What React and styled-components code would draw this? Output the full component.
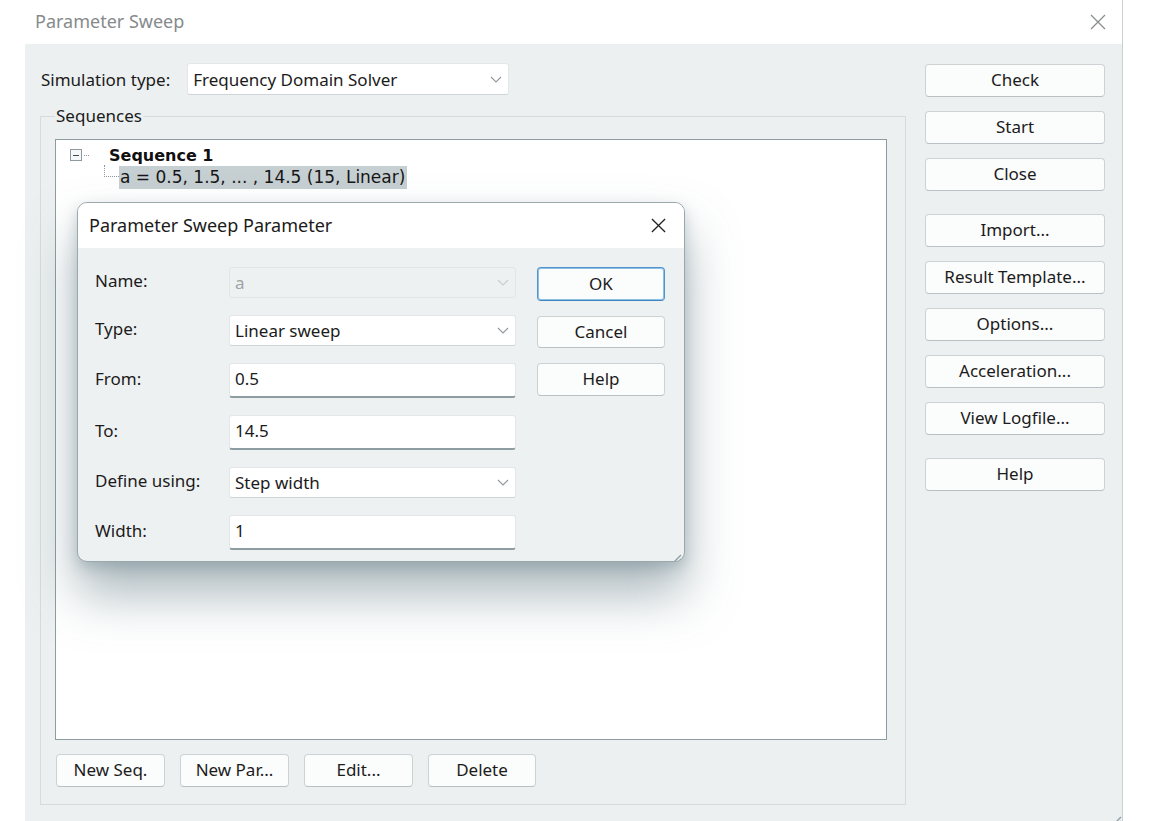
import React from 'react';
import styled, { createGlobalStyle } from 'styled-components';

const GlobalStyle = createGlobalStyle`
  html, body {
    margin: 0;
    padding: 0;
    background: #ffffff;
  }
  body {
    font-family: "Noto Sans", "Liberation Sans", sans-serif;
    color: #1b1b1b;
  }
  * { box-sizing: border-box; }
`;

const Page = styled.div`
  position: relative;
  width: 1149px;
  height: 821px;
  overflow: hidden;
`;

const Window = styled.div`
  margin-left: 25px;
  width: 1098px;
  height: 821px;
  display: flex;
  flex-direction: column;
  border-right: 1px solid #c9d1d3;
`;

const TitleBar = styled.div`
  height: 44px;
  flex: none;
  background: #ffffff;
  display: flex;
  align-items: center;
  justify-content: space-between;
  padding: 0 14px 0 10px;
`;

const Title = styled.div`
  font-size: 18px;
  color: ${p => (p.$muted ? '#868a8c' : '#1b1b1b')};
  padding-bottom: 2px;
`;

const CloseX = styled.button`
  border: 0;
  background: transparent;
  padding: 0;
  width: 20px;
  height: 20px;
  display: flex;
  align-items: center;
  justify-content: center;
  color: ${p => p.$color || '#8a8d8f'};
`;

const Body = styled.div`
  flex: 1;
  background: #ecf0f1;
  display: flex;
  padding: 19px 17px 16px 15px;
  gap: 19px;
  position: relative;
`;

const LeftColumn = styled.div`
  flex: 1;
  display: flex;
  flex-direction: column;
`;

const TypeRow = styled.div`
  display: flex;
  align-items: center;
  height: 32px;
  gap: 17px;
  padding-left: 1px;
`;

const Label = styled.span`
  font-size: 17px;
  color: #1b1b1b;
  white-space: nowrap;
`;

const Combo = styled.div`
  width: ${p => p.$width || '100%'};
  height: ${p => p.$height || '32px'};
  background: ${p => (p.$disabled ? '#eef1f2' : '#ffffff')};
  border: 1px solid ${p => (p.$disabled ? '#e1e5e6' : '#e3e7e8')};
  border-bottom-color: ${p => (p.$disabled ? '#e1e5e6' : '#cfd5d7')};
  border-radius: 3px;
  display: flex;
  align-items: center;
  justify-content: space-between;
  padding: 0 6px 0 5px;
  font-size: 17px;
  color: ${p => (p.$disabled ? '#9ea3a5' : '#1b1b1b')};
`;

const Chevron = ({ light }) => (
  <svg width="12" height="7" viewBox="0 0 12 7">
    <path d="M1 1 L6 6 L11 1" fill="none" stroke={light ? '#c8cdcf' : '#939a9d'} strokeWidth="1.1" />
  </svg>
);

const Group = styled.fieldset`
  flex: 1;
  margin: 11px 0 0 0;
  border: 1px solid #d6dcde;
  padding: 13px 18px 17px 14px;
  display: flex;
  flex-direction: column;
  min-width: 0;
`;

const Legend = styled.legend`
  font-size: 17px;
  padding: 0 1px;
  margin-left: 0;
  line-height: 20px;
`;

const TreeBox = styled.div`
  flex: 1;
  background: #ffffff;
  border: 1px solid #8c9ca1;
  padding: 5px 0 0 14px;
`;

const TreeRow = styled.div`
  display: flex;
  align-items: center;
  height: ${p => p.$h || '20px'};
`;

const Expander = styled.span`
  width: 12px;
  height: 12px;
  border: 1px solid #8f9aa0;
  display: flex;
  align-items: center;
  justify-content: center;
  background: #f4f6f7;
  flex: none;
`;

const ExpanderMinus = styled.span`
  width: 6px;
  height: 1px;
  background: #3d4a50;
`;

const Dots = styled.span`
  width: ${p => p.$w || '8px'};
  border-top: 1px dotted #8d989d;
  margin: ${p => p.$m || '0'};
  align-self: center;
`;

const NodeTitle = styled.span`
  font-family: "DejaVu Sans", "Noto Sans", sans-serif;
  font-weight: bold;
  font-size: 16px;
  margin-left: 20px;
  color: #101010;
`;

const Connector = styled.span`
  width: 15px;
  height: 12px;
  margin-left: 34px;
  border-left: 1px dotted #8d989d;
  border-bottom: 1px dotted #8d989d;
  align-self: flex-start;
  flex: none;
`;

const Selected = styled.span`
  background: #c6cfd2;
  font-family: "DejaVu Sans", "Noto Sans", sans-serif;
  font-size: 17px;
  padding: 0 2px 0 1px;
  line-height: 23px;
  color: #161616;
`;

const ButtonRow = styled.div`
  display: flex;
  gap: 15px;
  margin-top: 14px;
  padding-left: 1px;
`;

const Button = styled.button`
  width: ${p => p.$width || '180px'};
  height: ${p => p.$height || '33px'};
  margin-top: ${p => p.$gapTop || '0'};
  background: #fbfcfc;
  border: 1px solid ${p => (p.$primary ? '#4f95cc' : '#cdd3d5')};
  border-bottom-color: ${p => (p.$primary ? '#3f86c0' : '#b9c1c4')};
  box-shadow: ${p => (p.$primary ? 'inset 0 0 0 1px #8ec0e6' : 'none')};
  border-radius: 4px;
  font-family: inherit;
  font-size: 17px;
  color: #1b1b1b;
  padding: 0 0 2px 0;
  flex: none;
`;

const RightColumn = styled.div`
  width: 180px;
  display: flex;
  flex-direction: column;
  gap: 14px;
  padding-top: 1px;
`;

const Grip = styled.div`
  position: absolute;
  right: ${p => p.$r || '0'};
  bottom: ${p => p.$b || '0'};
  width: 12px;
  height: 12px;
`;

const GripLines = () => (
  <svg width="12" height="12" viewBox="0 0 12 12">
    <path d="M11 3 L3 11 M11 7 L7 11" stroke="#8c9ba0" strokeWidth="1.3" />
  </svg>
);

/* the modal child dialog */
const Dialog = styled.div`
  position: absolute;
  left: 77px;
  top: 202px;
  width: 608px;
  height: 360px;
  border: 1px solid #9aa8ad;
  border-radius: 10px;
  overflow: hidden;
  background: #eef1f2;
  box-shadow: 0 32px 50px rgba(90, 115, 125, 0.5), 0 6px 14px rgba(90, 115, 125, 0.3);
  display: flex;
  flex-direction: column;
`;

const DialogTitleBar = styled(TitleBar)`
  height: 45px;
  padding: 0 16px 0 11px;
`;

const DialogBody = styled.div`
  flex: 1;
  display: flex;
  align-items: flex-start;
  padding: 19px 19px 0 17px;
  position: relative;
`;

const Form = styled.div`
  display: grid;
  grid-template-columns: 134px 287px;
  align-content: start;
  row-gap: 17px;
  align-items: center;
`;

const FormLabel = styled(Label)`
  padding-bottom: 5px;
`;

const TextInput = styled.div`
  height: 35px;
  background: #ffffff;
  border: 1px solid #e3e7e8;
  border-bottom: 2px solid #8e9da2;
  border-radius: 3px;
  display: flex;
  align-items: flex-start;
  padding: 3px 5px 0;
  font-size: 17px;
`;

const DialogButtons = styled.div`
  display: flex;
  flex-direction: column;
  gap: 15px;
  margin-left: 21px;
`;

const rightButtons = [
  { label: 'Check' },
  { label: 'Start' },
  { label: 'Close' },
  { label: 'Import...', gap: '9px' },
  { label: 'Result Template...' },
  { label: 'Options...' },
  { label: 'Acceleration...' },
  { label: 'View Logfile...' },
  { label: 'Help', gap: '9px' },
];

const XIcon = ({ size = 16, stroke = 1.3 }) => (
  <svg width={size} height={size} viewBox="0 0 16 16">
    <path d="M1 1 L15 15 M15 1 L1 15" stroke="currentColor" strokeWidth={stroke} />
  </svg>
);

export default function App() {
  return (
    <Page>
      <GlobalStyle />
      <Window>
        <TitleBar>
          <Title $muted>Parameter Sweep</Title>
          <CloseX>
            <XIcon />
          </CloseX>
        </TitleBar>
        <Body>
          <LeftColumn>
            <TypeRow>
              <Label>Simulation type:</Label>
              <Combo $width="322px">
                Frequency Domain Solver
                <Chevron />
              </Combo>
            </TypeRow>
            <Group>
              <Legend>Sequences</Legend>
              <TreeBox>
                <TreeRow $h="20px">
                  <Expander>
                    <ExpanderMinus />
                  </Expander>
                  <Dots $w="5px" $m="0 0 0 2px" />
                  <NodeTitle>Sequence 1</NodeTitle>
                </TreeRow>
                <TreeRow $h="25px">
                  <Connector />
                  <Selected>a = 0.5, 1.5, ... , 14.5 (15, Linear)</Selected>
                </TreeRow>
              </TreeBox>
              <ButtonRow>
                <Button $width="109px" $height="33px">New Seq.</Button>
                <Button $width="109px" $height="33px">New Par...</Button>
                <Button $width="109px" $height="33px">Edit...</Button>
                <Button $width="108px" $height="33px">Delete</Button>
              </ButtonRow>
            </Group>
          </LeftColumn>
          <RightColumn>
            {rightButtons.map(b => (
              <Button key={b.label} $gapTop={b.gap}>
                {b.label}
              </Button>
            ))}
          </RightColumn>
          <Grip $r="0" $b="0">
            <GripLines />
          </Grip>
        </Body>
      </Window>

      <Dialog>
        <DialogTitleBar>
          <Title>Parameter Sweep Parameter</Title>
          <CloseX $color="#222">
            <XIcon size={15} stroke={1.4} />
          </CloseX>
        </DialogTitleBar>
        <DialogBody>
          <Form>
            <FormLabel>Name:</FormLabel>
            <Combo $disabled $height="31px">
              a
              <Chevron light />
            </Combo>
            <FormLabel>Type:</FormLabel>
            <Combo $height="31px">
              Linear sweep
              <Chevron />
            </Combo>
            <FormLabel>From:</FormLabel>
            <TextInput>0.5</TextInput>
            <FormLabel>To:</FormLabel>
            <TextInput>14.5</TextInput>
            <FormLabel>Define using:</FormLabel>
            <Combo $height="31px">
              Step width
              <Chevron />
            </Combo>
            <FormLabel>Width:</FormLabel>
            <TextInput>1</TextInput>
          </Form>
          <DialogButtons>
            <Button $primary $width="128px" $height="34px">OK</Button>
            <Button $width="128px" $height="32px">Cancel</Button>
            <Button $width="128px" $height="33px">Help</Button>
          </DialogButtons>
          <Grip $r="2px" $b="2px">
            <GripLines />
          </Grip>
        </DialogBody>
      </Dialog>
    </Page>
  );
}
